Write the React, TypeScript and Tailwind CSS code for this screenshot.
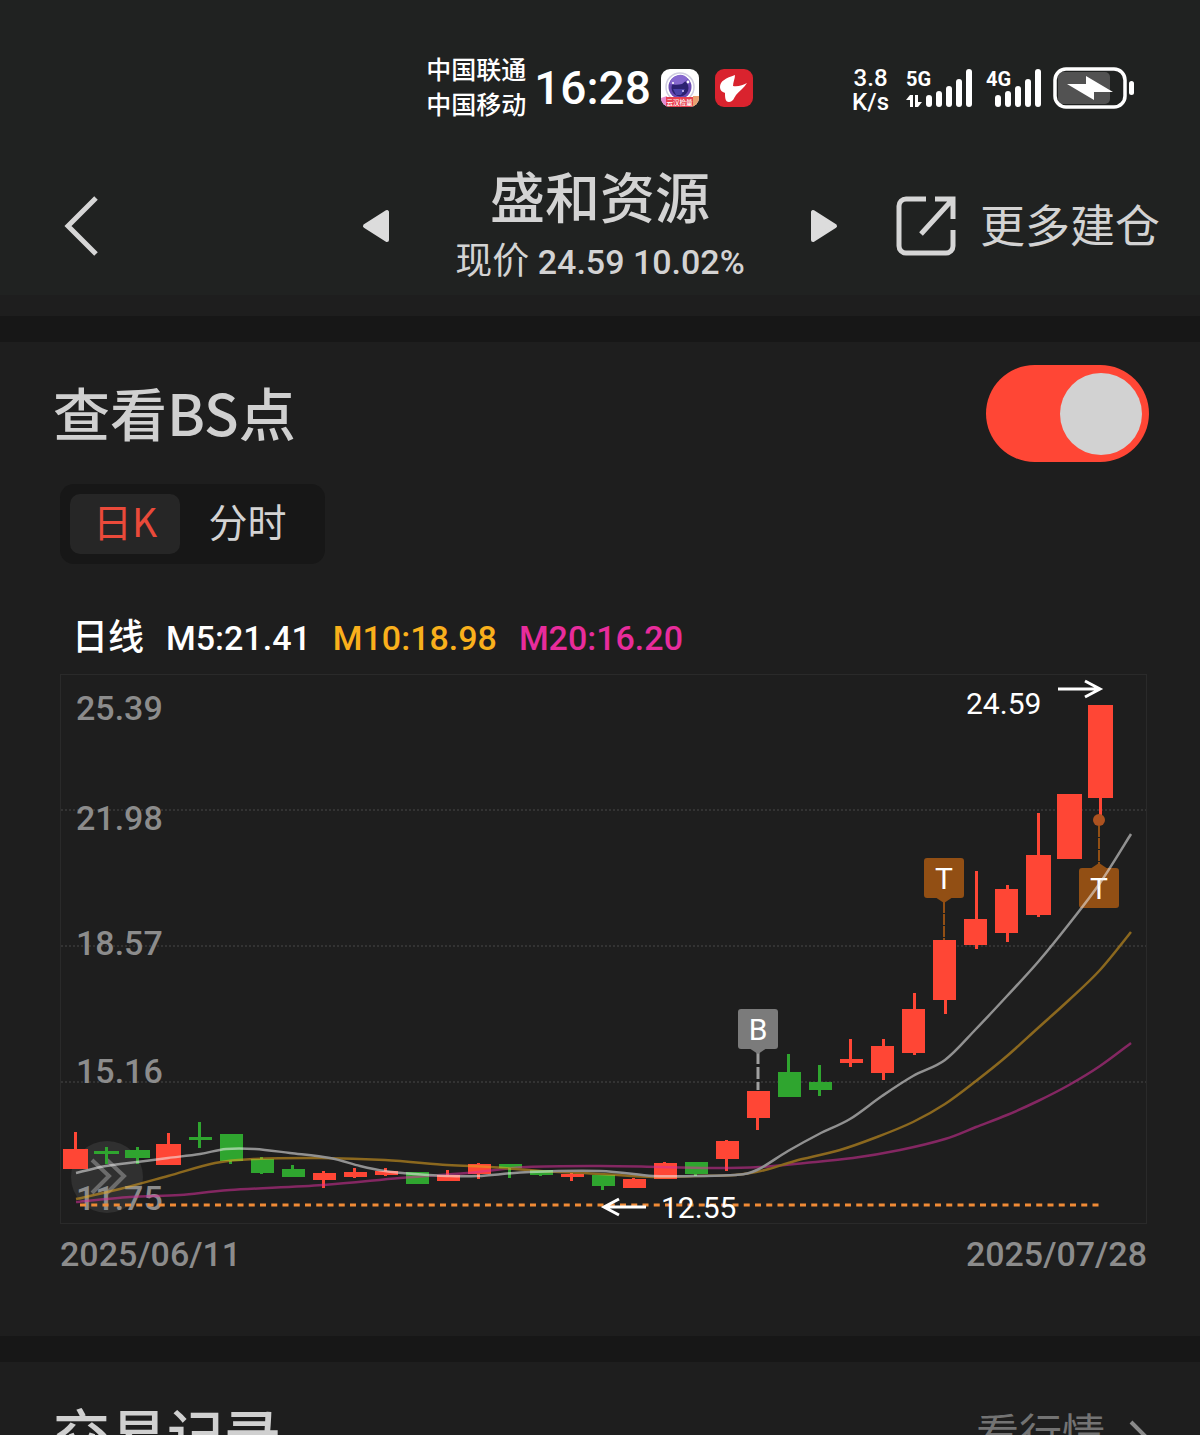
import { useState } from "react";

type Candle = {
  x: number;
  w: number;
  top: number;
  bottom: number;
  high: number;
  low: number;
  wick: number;
  up: boolean;
};

type Point = [number, number];

const UP = "#ff4635";
const DOWN = "#2fa52f";

// x, width, top, bottom, high, low, wick x, direction
const rawCandles: [number, number, number, number, number, number, number, 0 | 1][] = [
  [63, 25, 1150, 1170, 1133, 1170, 75, 1],
  [94, 25, 1152, 1155, 1148, 1165, 106, 0],
  [125, 25, 1151, 1159, 1148, 1165, 137, 0],
  [156, 25, 1145, 1166, 1134, 1166, 168, 1],
  [189, 23, 1138, 1141, 1123, 1149, 199, 0],
  [220, 23, 1135, 1162, 1135, 1165, 230, 0],
  [251, 23, 1160, 1174, 1158, 1175, 261, 0],
  [282, 23, 1170, 1178, 1166, 1178, 292, 0],
  [313, 23, 1174, 1181, 1172, 1189, 323, 1],
  [344, 23, 1173, 1178, 1169, 1179, 354, 1],
  [375, 23, 1172, 1176, 1169, 1177, 385, 1],
  [406, 23, 1173, 1185, 1173, 1185, 417, 0],
  [437, 23, 1176, 1182, 1171, 1182, 447, 1],
  [468, 23, 1165, 1175, 1164, 1180, 478, 1],
  [499, 23, 1165, 1169, 1165, 1179, 509, 0],
  [530, 23, 1171, 1176, 1171, 1177, 540, 0],
  [561, 23, 1175, 1178, 1174, 1182, 571, 1],
  [592, 23, 1176, 1187, 1176, 1191, 602, 0],
  [623, 23, 1180, 1189, 1179, 1189, 633, 1],
  [654, 23, 1164, 1180, 1163, 1180, 664, 1],
  [685, 23, 1163, 1175, 1163, 1177, 695, 0],
  [716, 23, 1142, 1160, 1141, 1172, 726, 1],
  [747, 23, 1092, 1119, 1092, 1131, 757, 1],
  [778, 23, 1073, 1098, 1055, 1098, 788, 0],
  [809, 23, 1083, 1091, 1066, 1097, 819, 0],
  [840, 23, 1060, 1064, 1040, 1068, 850, 1],
  [871, 23, 1047, 1074, 1040, 1081, 883, 1],
  [902, 23, 1010, 1054, 994, 1056, 914, 1],
  [933, 23, 941, 1001, 941, 1015, 945, 1],
  [964, 23, 920, 946, 872, 950, 976, 1],
  [995, 23, 890, 934, 886, 943, 1007, 1],
  [1026, 25, 856, 916, 814, 918, 1038, 1],
  [1057, 25, 795, 860, 795, 860, 1069, 1],
  [1088, 25, 706, 799, 706, 825, 1100, 1],
];

const candles: Candle[] = rawCandles.map(
  ([x, w, top, bottom, high, low, wick, up]) => ({
    x,
    w,
    top,
    bottom,
    high,
    low,
    wick,
    up: up === 1,
  }),
);

const ma5: Point[] = [
  [76, 1174], [106, 1167], [137, 1163], [168, 1159], [200, 1155], [226, 1150],
  [255, 1150], [290, 1154], [330, 1159], [360, 1167], [385, 1172], [415, 1175],
  [447, 1177], [478, 1177], [530, 1173], [600, 1172], [653, 1177], [695, 1177],
  [735, 1176], [757, 1171], [788, 1152], [819, 1135], [850, 1120], [882, 1097],
  [913, 1077], [945, 1061], [976, 1030], [1007, 997], [1038, 963],
  [1069, 925], [1100, 884], [1131, 835],
];

const ma10: Point[] = [
  [76, 1200], [120, 1190], [168, 1177], [215, 1164], [255, 1160], [320, 1159],
  [385, 1161], [447, 1166], [490, 1168], [540, 1172], [600, 1175], [653, 1178],
  [695, 1177], [735, 1176], [765, 1171], [795, 1162], [840, 1151], [877, 1138],
  [913, 1123], [945, 1105], [976, 1082], [1007, 1057], [1038, 1029],
  [1069, 1001], [1100, 971], [1131, 933],
];

const ma20: Point[] = [
  [76, 1203], [130, 1198], [180, 1196], [230, 1191], [323, 1186], [400, 1179],
  [467, 1174], [527, 1168], [600, 1167], [660, 1168], [717, 1169], [760, 1168],
  [805, 1164], [853, 1159], [900, 1151], [945, 1140], [976, 1128],
  [1007, 1116], [1038, 1102], [1069, 1086], [1100, 1067], [1131, 1044],
];

const gridRows = [811, 947, 1083];

const priceLabels = [
  { text: "25.39", y: 721 },
  { text: "21.98", y: 831 },
  { text: "18.57", y: 956 },
  { text: "15.16", y: 1084 },
  { text: "11.75", y: 1211 },
];

const averages = [
  { label: "M5:21.41", className: "text-white" },
  { label: "M10:18.98", className: "text-[#f9b01c]" },
  { label: "M20:16.20", className: "text-[#e82c9c]" },
];

const tabs = ["日K", "分时"];

// Catmull-Rom spline turned into cubic segments
const smoothPath = (pts: Point[]) => {
  let d = `M${pts[0][0]} ${pts[0][1]}`;
  for (let i = 0; i < pts.length - 1; i++) {
    const p0 = pts[i - 1] ?? pts[i];
    const p1 = pts[i];
    const p2 = pts[i + 1];
    const p3 = pts[i + 2] ?? p2;
    d += ` C${p1[0] + (p2[0] - p0[0]) / 6} ${p1[1] + (p2[1] - p0[1]) / 6} ${
      p2[0] - (p3[0] - p1[0]) / 6
    } ${p2[1] - (p3[1] - p1[1]) / 6} ${p2[0]} ${p2[1]}`;
  }
  return d;
};

function SignalBars() {
  return (
    <svg viewBox="0 0 48 38" className="h-[38px] w-12" fill="#fff">
      <rect x="1" y="26" width="6" height="12" rx="3" />
      <rect x="11" y="22" width="6" height="16" rx="3" />
      <rect x="21" y="17" width="6" height="21" rx="3" />
      <rect x="31" y="10" width="6" height="28" rx="3" />
      <rect x="41" y="0" width="6" height="38" rx="3" />
    </svg>
  );
}

function StatusBar() {
  return (
    <div className="grid grid-cols-[1fr_auto_1fr] items-center pt-[53px] pr-[65px] pl-11 text-white">
      <div />
      <div className="flex items-center">
        <div className="text-[25px] leading-[35px] font-medium">
          <div>中国联通</div>
          <div>中国移动</div>
        </div>
        <time className="ml-2 text-[46px] leading-[60px] font-medium">16:28</time>
        <svg viewBox="0 0 38 38" className="ml-2.5 size-[38px]">
          <defs>
            <clipPath id="camera-clip">
              <rect width="38" height="38" rx="9" />
            </clipPath>
          </defs>
          <g clipPath="url(#camera-clip)">
            <rect width="38" height="38" fill="#fff" />
            <circle cx="19" cy="18" r="14" fill="none" stroke="#cfcde0" strokeWidth="1.5" />
            <circle cx="19" cy="18" r="11.5" fill="#6a4bb4" />
            <circle cx="19" cy="19" r="8.5" fill="#2c2170" />
            <path d="M9 15a10 10 0 0 1 18-5l-6 5c-4 1-8 1-12 0z" fill="#8668cf" />
            <path d="M12 20h12l-4 6h-5z" fill="#4a42a8" />
            <circle cx="12" cy="14" r="1" fill="#fff" />
            <circle cx="27" cy="13" r="1.4" fill="#fff" />
            <circle cx="22" cy="22" r="1" fill="#d4c7ff" />
            <path d="M0 29l6-2v11H0z" fill="#e58bd0" />
            <path d="M38 27h-6v11h6z" fill="#e9a070" />
            <rect x="5" y="28" width="27" height="11" fill="#e8404f" />
            <text x="18.5" y="36" textAnchor="middle" fontSize="6.5" fontWeight="500" fill="#fff">
              云汉检量
            </text>
          </g>
        </svg>
        <svg viewBox="0 0 38 38" className="ml-4 size-[38px]">
          <rect width="38" height="38" rx="9" fill="#d9232e" />
          <path
            d="M20 6C11 9 5 12 5 18c0 4 3 5 5 6 0 4 0 9 4 9 4 0 5-4 7-7 3-4 8-7 11-12-4 2-9 4-14 3 0-4 2-7 2-11z"
            fill="#fff"
          />
        </svg>
      </div>
      <div className="flex items-center justify-end">
        <div className="mt-1 text-center text-2xl leading-6 font-medium">
          <div>3.8</div>
          <div>K/s</div>
        </div>
        <div className="relative ml-4 flex pl-5">
          <span className="absolute top-0 left-px text-xl leading-5 font-bold">5G</span>
          <svg viewBox="0 0 16 12" className="absolute bottom-0 left-px h-3 w-4" fill="#fff">
            <path d="M4 0h3v12H4V5H0z" />
            <path d="M9 0h3v7h4l-4 5H9z" />
          </svg>
          <SignalBars />
        </div>
        <div className="relative ml-[13px] flex pl-2">
          <span className="absolute top-0 left-0 text-xl leading-5 font-bold">4G</span>
          <SignalBars />
        </div>
        <svg viewBox="0 0 82 42" className="ml-[11px] h-[42px] w-[82px]">
          <rect x="5" y="5" width="52" height="32" rx="5" fill="#525252" />
          <rect x="2" y="2" width="70" height="38" rx="11" fill="none" stroke="#fff" strokeWidth="3.5" />
          <rect x="76" y="14" width="5" height="14" rx="2.5" fill="#fff" />
          <path d="M14 17h19V9l27 16H41v8z" fill="#fff" />
        </svg>
      </div>
    </div>
  );
}

function NavBar() {
  return (
    <header className="grid grid-cols-[1fr_auto_1fr] items-center px-10 pt-10 pb-1.5 text-[#d3d3d3]">
      <button type="button" aria-label="返回" className="ml-6 justify-self-start">
        <svg viewBox="0 0 36 60" className="h-[60px] w-9" fill="none" stroke="#d6d6d6" strokeWidth="5">
          <path d="M32 2L4 30l28 28" />
        </svg>
      </button>
      <div className="flex w-[476px] items-center justify-between">
        <button type="button" aria-label="上一只">
          <svg viewBox="0 0 28 34" className="h-[34px] w-7" fill="#dcdcdc" stroke="#dcdcdc" strokeWidth="4" strokeLinejoin="round">
            <path d="M3 17L25 3v28z" />
          </svg>
        </button>
        <div className="text-center">
          <h1 className="text-[55px] leading-[72px] font-medium">盛和资源</h1>
          <p className="text-[34px] leading-[54px] font-medium">
            <span className="text-[37px] leading-[54px] font-normal">现价</span> 24.59 10.02%
          </p>
        </div>
        <button type="button" aria-label="下一只">
          <svg viewBox="0 0 28 34" className="h-[34px] w-7" fill="#dcdcdc" stroke="#dcdcdc" strokeWidth="4" strokeLinejoin="round">
            <path d="M25 17L3 3v28z" />
          </svg>
        </button>
      </div>
      <a href="#more" className="flex items-center gap-6 justify-self-end whitespace-nowrap">
        <svg viewBox="0 0 60 60" className="size-[60px]" fill="none" stroke="#d6d6d6" strokeWidth="5">
          <path d="M30 3H10a7 7 0 0 0-7 7v40a7 7 0 0 0 7 7h40a7 7 0 0 0 7-7V34" />
          <path d="M39 3h18v20M56 4L25 38" />
        </svg>
        <span className="pt-1 text-[45px] leading-[60px]">更多建仓</span>
      </a>
    </header>
  );
}

function Marker({ x, y, letter, fill, down }: { x: number; y: number; letter: string; fill: string; down: boolean }) {
  const tip = down
    ? `M${x - 9} ${y + 39}h18l-9 6z`
    : `M${x - 9} ${y + 1}h18l-9 -6z`;
  return (
    <g>
      <rect x={x - 20} y={y} width="40" height="40" rx="3" fill={fill} />
      <path d={tip} fill={fill} />
      <text x={x} y={y + 31} textAnchor="middle" fontSize="30" fill="#fff">
        {letter}
      </text>
    </g>
  );
}

function KLineChart() {
  return (
    <svg viewBox="60 675 1087 550" className="block w-full" role="img" aria-label="日K">
      <rect x="60.5" y="675.5" width="1086" height="549" fill="none" stroke="#2a2a2a" />
      {gridRows.map((y) => (
        <path key={y} d={`M61 ${y}H1146`} stroke="#333" strokeWidth="2" strokeDasharray="2 2" />
      ))}

      <circle cx="107" cy="1178" r="36" fill="#303030" />
      <path
        d="M92 1161l17 16-17 17M107 1161l17 16-17 17"
        fill="none"
        stroke="#6c6c6c"
        strokeWidth="4"
      />
      {priceLabels.map((p) => (
        <text key={p.text} x="76" y={p.y} fontSize="34" fontWeight="500" fill="#8c8c8c">
          {p.text}
        </text>
      ))}

      <path d="M80 1206H1102" stroke="#f08b36" strokeWidth="3" strokeDasharray="6 5.25" />

      {candles.map((c) => (
        <g key={c.x} fill={c.up ? UP : DOWN}>
          <rect x={c.wick - 1} y={c.high} width="3" height={c.low - c.high} />
          <rect x={c.x} y={c.top} width={c.w} height={c.bottom - c.top} />
        </g>
      ))}

      <path d="M758 1053V1091" stroke="#a0a0a0" strokeWidth="3" strokeDasharray="12 3" />
      <Marker x={758} y={1010} letter="B" fill="#7b7b7b" down />
      <path d="M944 903V941" stroke="#924f14" strokeWidth="2" strokeDasharray="11 1" />
      <Marker x={944} y={859} letter="T" fill="#924f14" down />
      <circle cx="1099" cy="821" r="6" fill="#ad5220" />
      <path d="M1099 827V865" stroke="#924f14" strokeWidth="2" strokeDasharray="11 1" />
      <Marker x={1099} y={869} letter="T" fill="#924f14" down={false} />

      <g fill="none" strokeWidth="2.5" opacity="0.55">
        <path d={smoothPath(ma20)} stroke="#d82f9a" />
        <path d={smoothPath(ma10)} stroke="#e5a51f" />
        <path d={smoothPath(ma5)} stroke="#f0f0f0" />
      </g>

      <g fill="none" stroke="#fff" strokeWidth="3">
        <path d="M1058 690H1099M1085 682l15 8-15 8" />
        <path d="M646 1208H605M619 1200l-15 8 15 8" />
      </g>
      <text x="966" y="715" fontSize="30" fill="#fff">
        24.59
      </text>
      <text x="661" y="1219" fontSize="30" fill="#fff">
        12.55
      </text>
    </svg>
  );
}

export default function App() {
  const [showPoints, setShowPoints] = useState(true);
  const [tab, setTab] = useState("日K");

  return (
    <div className="h-screen overflow-hidden bg-[#1e1e1e] font-[Roboto,'Noto_Sans_CJK_SC',sans-serif]">
      <div className="bg-[#202221]">
        <StatusBar />
        <NavBar />
      </div>

      <main>
        <section className="mt-[21px] border-t-[26px] border-[#171717] pt-[23px] pb-[58px]">
          <div className="flex items-center justify-between pr-[51px] pl-[53px]">
            <label
              htmlFor="bs-points"
              className="pb-1.5 font-['Noto_Sans_CJK_SC',sans-serif] text-[57px] leading-[80px] font-medium text-[#d0d0d0]"
            >
              查看BS点
            </label>
            <input
              id="bs-points"
              type="checkbox"
              role="switch"
              checked={showPoints}
              onChange={(e) => setShowPoints(e.target.checked)}
              className="flex h-[97px] w-[163px] appearance-none items-center rounded-full bg-[#444] px-[7px] before:size-[82px] before:rounded-full before:bg-[#d2d2d2] checked:justify-end checked:bg-[#ff4635]"
            />
          </div>

          <div className="pr-[53px] pl-[60px]">
            <div className="mt-[22px] inline-flex rounded-[14px] bg-[#171717] p-2.5 font-['Noto_Sans_CJK_SC',sans-serif] text-[39px] leading-[52px]">
              {tabs.map((t) => (
                <button
                  key={t}
                  type="button"
                  onClick={() => setTab(t)}
                  className={`rounded-[10px] pb-2 ${t === "日K" ? "w-[110px]" : "w-[135px]"} ${
                    t === tab ? "bg-[#262626] text-[#ea4a3a]" : "text-[#d3d3d3]"
                  }`}
                >
                  {t}
                </button>
              ))}
            </div>

            <div className="mt-[47px] mb-[9px] flex gap-[22px] pl-3 text-[34px] leading-[54px] font-medium">
              <span className="text-4xl leading-[54px] text-white">日线</span>
              {averages.map((a) => (
                <span key={a.label} className={a.className}>
                  {a.label}
                </span>
              ))}
            </div>

            <KLineChart />

            <div className="mt-1.5 flex justify-between text-[34px] leading-[48px] font-medium text-[#8c8c8c]">
              <time>2025/06/11</time>
              <time>2025/07/28</time>
            </div>
          </div>
        </section>

        <section className="flex items-center justify-between border-t-[26px] border-[#171717] pt-9 pr-[51px] pl-[53px]">
          <h2 className="text-[57px] leading-[80px] font-medium text-[#d0d0d0]">交易记录</h2>
          <a href="#quote" className="flex items-center gap-6 text-[43px] leading-[60px] text-[#737373]">
            <span className="pb-1.5">看行情</span>
            <svg viewBox="0 0 20 36" className="h-9 w-5" fill="none" stroke="#8a8a8a" strokeWidth="4">
              <path d="M2 2l16 16L2 34" />
            </svg>
          </a>
        </section>
      </main>
    </div>
  );
}
